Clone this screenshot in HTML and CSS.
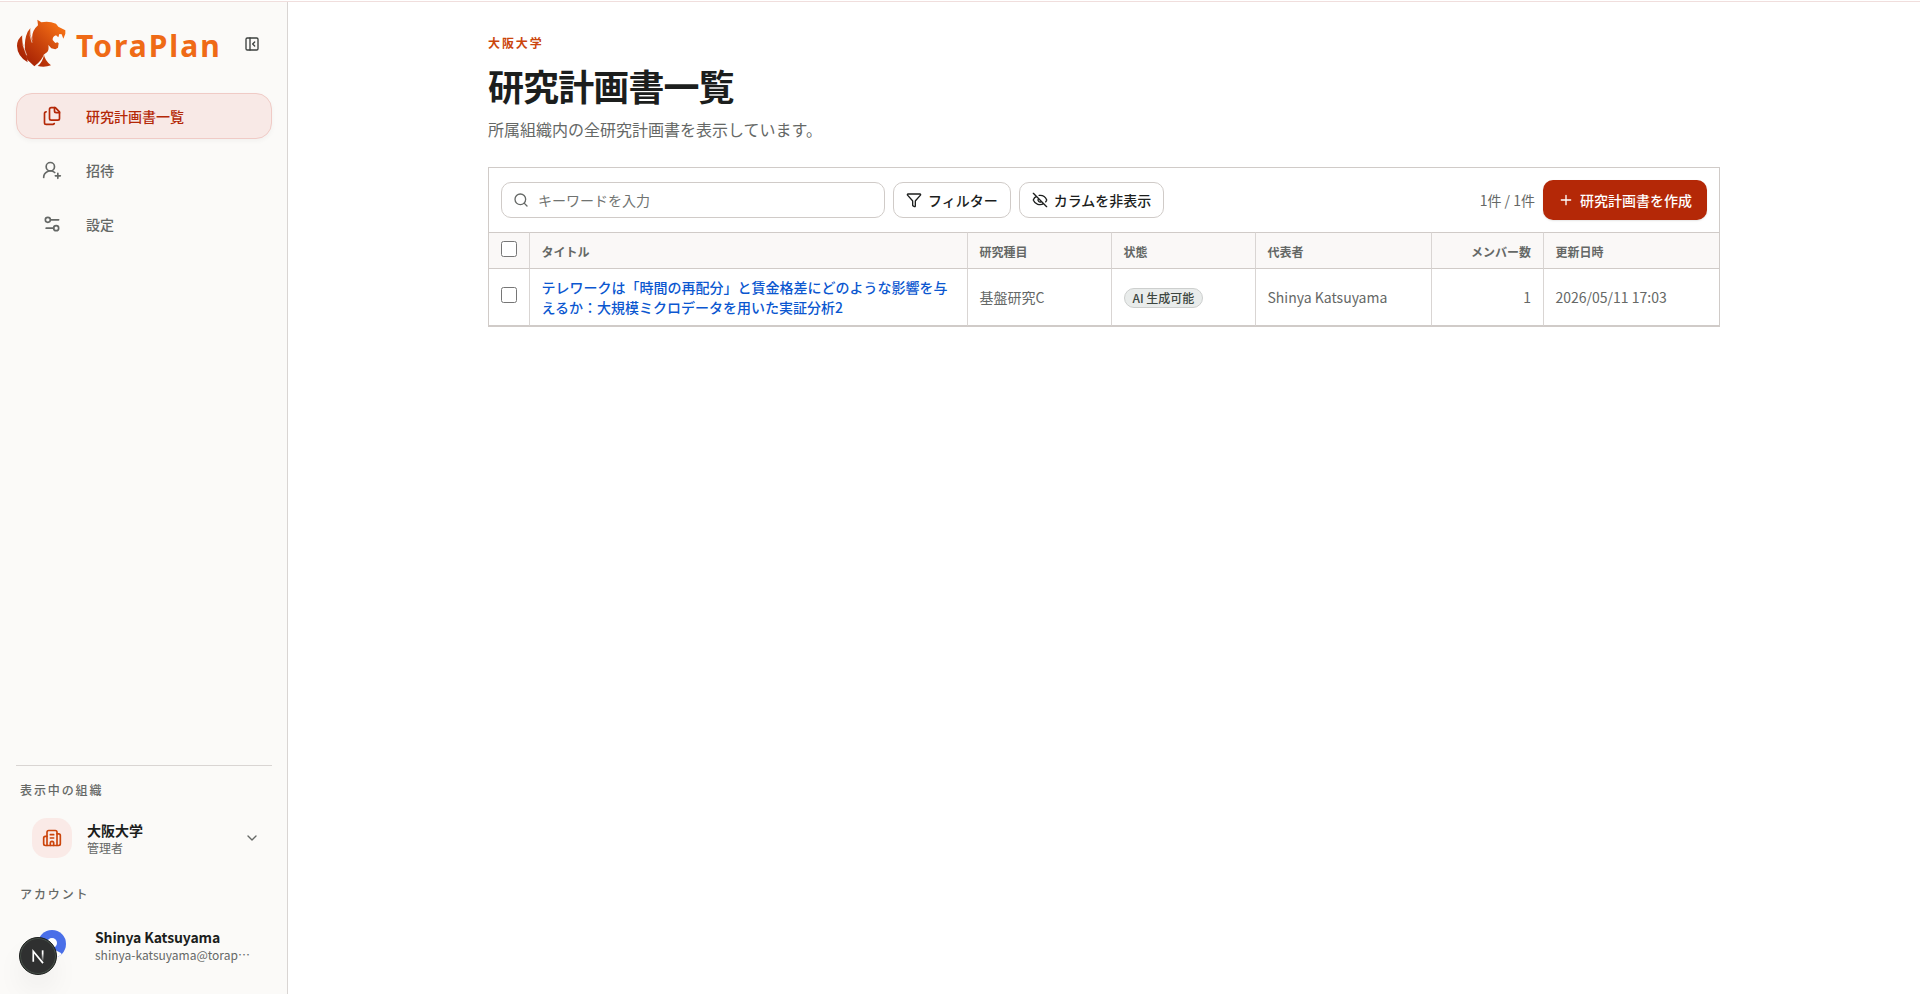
FILE: index.html
```
<!DOCTYPE html>
<html lang="ja">
<head>
    <meta charset="UTF-8">
    <meta name="viewport" content="width=device-width, initial-scale=1.0">
    <title>研究計画書一覧 | ToraPlan</title>
    <link rel="stylesheet" href="styles.css">
</head>
<body>
    <div class="layout">
        <aside class="sidebar">
            <div class="brand">
                <svg class="brand-mark" viewBox="12 12 150 150">
                    <defs>
                        <linearGradient id="tora" x1="0" y1="1" x2="1" y2="0">
                            <stop offset="0.15" stop-color="#a82305"/>
                            <stop offset="0.5" stop-color="#cb450c"/>
                            <stop offset="0.85" stop-color="#f26d14"/>
                        </linearGradient>
                    </defs>
                    <path fill="url(#tora)" d="M76 17L88 25Q110 20 132 29L139 38L160 49L160 59L154 74L149 61L142 60L139 70L132 64Q121 68 122 78L130 87L136 85L140 88L138 101L130 106L118 103L109 93Q112 108 105 115L95 122Q91 138 67 157L46 137L43 122L47 145Q16 127 15 96Q15 76 31 64Q30 88 39 108Q36 77 47 53L56 41Q54 62 61 80Q58 58 70 42L78 34ZM96 122Q98 138 117 154Q98 161 77 156Q92 145 96 122Z"/>
                    <path fill="none" stroke="#fbfaf8" stroke-width="2" d="M32 64Q29 96 44 124M56 42Q51 66 60 86"/>
                </svg>
                <span class="brand-name">ToraPlan</span>
                <button class="collapse" aria-label="サイドバーを閉じる">
                    <svg class="icon" viewBox="0 0 24 24"><rect x="3" y="3" width="18" height="18" rx="2"/><path d="M9 3v18M16 9l-3 3 3 3"/></svg>
                </button>
            </div>

            <nav class="nav">
                <a class="nav-item active" href="#">
                    <svg class="icon" viewBox="0 0 24 24"><path d="M16 2h-5a2 2 0 0 0-2 2v11a2 2 0 0 0 2 2h8a2 2 0 0 0 2-2V7z"/><path d="M15 2v4a2 2 0 0 0 2 2h4M5 7a2 2 0 0 0-2 2v11a2 2 0 0 0 2 2h8a2 2 0 0 0 1.7-1"/></svg>
                    <span>研究計画書一覧</span>
                </a>
                <a class="nav-item" href="#">
                    <svg class="icon" viewBox="0 0 24 24"><circle cx="10" cy="8" r="5"/><path d="M2 21a8 8 0 0 1 13.3-6M19 16v6M22 19h-6"/></svg>
                    <span>招待</span>
                </a>
                <a class="nav-item" href="#">
                    <svg class="icon" viewBox="0 0 24 24"><circle cx="7" cy="7" r="3"/><circle cx="17" cy="17" r="3"/><path d="M20 7h-9M14 17H5"/></svg>
                    <span>設定</span>
                </a>
            </nav>

            <div class="sidebar-footer">
                <p class="section-label">表示中の組織</p>
                <div class="org">
                    <span class="org-icon">
                        <svg class="icon" viewBox="0 0 24 24"><path d="M10 12h4M10 8h4M14 21v-3a2 2 0 0 0-4 0v3"/><path d="M6 10H4a2 2 0 0 0-2 2v7a2 2 0 0 0 2 2h16a2 2 0 0 0 2-2V9a2 2 0 0 0-2-2h-2"/><path d="M6 21V5a2 2 0 0 1 2-2h8a2 2 0 0 1 2 2v16"/></svg>
                    </span>
                    <div class="org-text">
                        <strong>大阪大学</strong>
                        <small>管理者</small>
                    </div>
                    <svg class="icon chevron" viewBox="0 0 24 24"><path d="m6 9 6 6 6-6"/></svg>
                </div>
                <p class="section-label">アカウント</p>
                <div class="account">
                    <svg class="avatar" viewBox="0 0 28 28">
                        <clipPath id="round"><circle cx="14" cy="14" r="14"/></clipPath>
                        <g clip-path="url(#round)">
                            <rect width="28" height="28" fill="#4a6fe8"/>
                            <circle cx="14" cy="13" r="5" fill="#fff"/>
                            <ellipse cx="14" cy="29" rx="12" ry="9" fill="#fff"/>
                        </g>
                    </svg>
                    <div class="account-text">
                        <strong>Shinya Katsuyama</strong>
                        <small>shinya-katsuyama@torap⋯</small>
                    </div>
                </div>
            </div>
        </aside>

        <main class="main">
            <div class="container">
                <p class="eyebrow">大阪大学</p>
                <h1>研究計画書一覧</h1>
                <p class="lead">所属組織内の全研究計画書を表示しています。</p>

                <section class="panel">
                    <div class="toolbar">
                        <label class="search">
                            <svg class="icon" viewBox="0 0 24 24"><circle cx="11" cy="11" r="8"/><path d="m21 21-4.3-4.3"/></svg>
                            <input type="text" placeholder="キーワードを入力">
                        </label>
                        <button class="btn">
                            <svg class="icon" viewBox="0 0 24 24"><path d="M10 20a1 1 0 0 0 .55.9l2 1A1 1 0 0 0 14 21v-7a2 2 0 0 1 .52-1.34L21.74 4.67A1 1 0 0 0 21 3H3a1 1 0 0 0-.74 1.67l7.22 7.99A2 2 0 0 1 10 14z"/></svg>
                            フィルター
                        </button>
                        <button class="btn">
                            <svg class="icon" viewBox="0 0 24 24"><path d="M10.73 5.08a10.74 10.74 0 0 1 11.21 6.57 1 1 0 0 1 0 .7 10.75 10.75 0 0 1-1.45 2.49M14.08 14.16a3 3 0 0 1-4.24-4.24M17.48 17.5a10.75 10.75 0 0 1-15.42-5.15 1 1 0 0 1 0-.7 10.75 10.75 0 0 1 4.45-5.14M2 2l20 20"/></svg>
                            カラムを非表示
                        </button>
                        <span class="count">1件 / 1件</span>
                        <button class="btn-primary">
                            <svg class="icon" viewBox="0 0 24 24"><path d="M5 12h14M12 5v14"/></svg>
                            研究計画書を作成
                        </button>
                    </div>
                    <table>
                        <colgroup>
                            <col class="col-check"><col class="col-title"><col class="col-type"><col class="col-status"><col class="col-owner"><col class="col-members"><col class="col-date">
                        </colgroup>
                        <thead>
                            <tr>
                                <th><input type="checkbox"></th>
                                <th>タイトル</th>
                                <th>研究種目</th>
                                <th>状態</th>
                                <th>代表者</th>
                                <th class="num">メンバー数</th>
                                <th>更新日時</th>
                            </tr>
                        </thead>
                        <tbody>
                            <tr>
                                <td><input type="checkbox"></td>
                                <td><a href="#">テレワークは「時間の再配分」と賃金格差にどのような影響を与えるか：大規模ミクロデータを用いた実証分析2</a></td>
                                <td>基盤研究C</td>
                                <td><span class="badge">AI 生成可能</span></td>
                                <td>Shinya Katsuyama</td>
                                <td class="num">1</td>
                                <td>2026/05/11 17:03</td>
                            </tr>
                        </tbody>
                    </table>
                </section>
            </div>
        </main>
    </div>

    <!-- Dev tools indicator -->
    <div class="dev-badge">
        <svg viewBox="0 0 38 38">
            <defs>
                <linearGradient id="fade" x1="0" y1="0" x2="0" y2="1">
                    <stop offset="0.3" stop-color="#fff"/>
                    <stop offset="1" stop-color="#fff" stop-opacity="0.1"/>
                </linearGradient>
            </defs>
            <path d="M14 25V14L24.3 26.5" fill="none" stroke="#fff" stroke-width="1.8"/>
            <rect x="23" y="13" width="1.8" height="11" fill="url(#fade)"/>
        </svg>
    </div>
</body>
</html>
```
FILE: styles.css
```
/* Base styles */
* {
    box-sizing: border-box;
}

body {
    margin: 0;
    padding-top: 1px;
    height: 100vh;
    font-family: 'Noto Sans CJK JP', sans-serif;
    font-size: 14px;
    line-height: 20px;
    color: #1c1e1d;
    background-color: #fff;
}

p, h1 {
    margin: 0;
}

a {
    text-decoration: none;
}

button, input {
    font-family: inherit;
    font-size: 14px;
}

.icon {
    width: 16px;
    height: 16px;
    flex-shrink: 0;
    fill: none;
    stroke: currentColor;
    stroke-width: 2;
    stroke-linecap: round;
    stroke-linejoin: round;
}

.layout {
    display: flex;
    height: 100%;
    border-top: 1px solid #f0dedd;
}

/* Sidebar */
.sidebar {
    width: 288px;
    flex-shrink: 0;
    display: flex;
    flex-direction: column;
    padding: 16px 15px 0 16px;
    background-color: #fbfaf8;
    border-right: 1px solid #d9d5d3;
}

.brand {
    display: flex;
    align-items: center;
    height: 50px;
}

.brand-mark {
    width: 50px;
    height: 50px;
}

.brand-name {
    margin-left: 10px;
    font-family: 'Noto Sans', sans-serif;
    font-size: 30px;
    font-weight: 700;
    line-height: 40px;
    letter-spacing: 2px;
    color: #ef6a16;
    padding-top: 5px;
}

.collapse {
    display: flex;
    margin-left: auto;
    margin-right: 12px;
    padding: 2px 0 0;
    border: none;
    background: none;
    color: #3c403e;
}

.nav {
    display: flex;
    flex-direction: column;
    gap: 8px;
    margin-top: 25px;
}

.nav-item {
    display: flex;
    align-items: center;
    gap: 24px;
    height: 46px;
    padding: 0 25px;
    border: 1px solid transparent;
    border-radius: 16px;
    color: #656866;
    font-weight: 500;
}

.nav-item .icon {
    width: 20px;
    height: 20px;
}

.nav-item.active {
    background-color: #f8e9e6;
    border-color: #f0cbc6;
    color: #b42807;
    box-shadow: 0 2px 5px rgba(0, 0, 0, 0.04);
}

.sidebar-footer {
    margin-top: auto;
    height: 229px;
    padding-top: 15px;
    border-top: 1px solid #d9d5d3;
}

.section-label {
    padding-left: 4px;
    font-size: 12px;
    line-height: 18px;
    font-weight: 500;
    letter-spacing: 1.9px;
    color: #656866;
}

.org {
    display: flex;
    align-items: center;
    height: 40px;
    margin: 19px 0 27px;
    padding: 0 14px 0 16px;
}

.org-icon {
    display: flex;
    align-items: center;
    justify-content: center;
    width: 40px;
    height: 40px;
    margin-right: 15px;
    border-radius: 15px;
    background-color: #faeae7;
    color: #cb450c;
}

.org-icon .icon {
    width: 20px;
    height: 20px;
}

.org-text, .account-text {
    display: flex;
    flex-direction: column;
}

.org strong, .account strong {
    line-height: 18px;
    font-weight: 700;
}

.org small, .account small {
    font-size: 12px;
    line-height: 17px;
    color: #656866;
}

.account strong {
    letter-spacing: -0.12px;
}

.chevron {
    margin-left: auto;
    margin-right: -2px;
    color: #656866;
}

.account {
    display: flex;
    align-items: center;
    gap: 29px;
    height: 36px;
    margin-top: 24px;
    padding-left: 22px;
}

.avatar {
    width: 28px;
    height: 28px;
    margin-top: -2px;
}

/* Main */
.main {
    flex: 1;
}

.container {
    width: 1232px;
    margin: 0 auto;
    padding-top: 32px;
}

.eyebrow {
    font-size: 12px;
    line-height: 18px;
    font-weight: 700;
    letter-spacing: 1.9px;
    color: #cb450c;
}

h1 {
    margin-top: 12px;
    font-size: 36px;
    line-height: 42px;
    font-weight: 700;
    letter-spacing: -0.9px;
}

.lead {
    margin-top: 10px;
    font-size: 16px;
    line-height: 26px;
    color: #656866;
}

.panel {
    margin-top: 25px;
    border: 1px solid #d0cbc8;
}

.toolbar {
    display: flex;
    align-items: center;
    gap: 8px;
    height: 64px;
    padding: 0 12px;
}

.search {
    display: flex;
    align-items: center;
    gap: 9px;
    width: 384px;
    height: 36px;
    padding: 0 11px;
    border: 1px solid #d0cbc8;
    border-radius: 10px;
    color: #656866;
}

.search input {
    flex: 1;
    border: none;
    outline: none;
    padding: 0;
}

.search input::placeholder {
    color: #707371;
}

.btn, .btn-primary {
    display: flex;
    align-items: center;
    gap: 6px;
    height: 36px;
    padding: 0 12px;
    border: 1px solid #d0cbc8;
    border-radius: 10px;
    background-color: #fff;
    color: #1c1e1d;
    font-weight: 500;
}

.count {
    margin-left: auto;
    color: #656866;
}

.btn-primary {
    height: 40px;
    padding: 0 15px;
    border: none;
    background-color: #b42807;
    color: #fff;
    box-shadow: 0 1px 2px rgba(0, 0, 0, 0.1);
}

/* Table */
table {
    width: 100%;
    table-layout: fixed;
    border-collapse: separate;
    border-spacing: 0;
}

.col-check { width: 41px; }
.col-title { width: 438px; }
.col-type, .col-status { width: 144px; }
.col-owner { width: 176px; }
.col-members { width: 112px; }

th, td {
    padding: 0 12px 0 11.5px;
    text-align: left;
    color: #656866;
    border-right: 1px solid #d9d5d3;
}

th:first-child, td:first-child {
    padding-left: 12px;
}

th {
    height: 37px;
    padding-top: 2px;
    font-size: 12px;
    font-weight: 700;
    background-color: #faf8f7;
    border-top: 1px solid #d0cbc8;
    border-bottom: 1px solid #d0cbc8;
}

td {
    height: 57px;
    border-bottom: 1px solid #d0cbc8;
}

th:last-child, td:last-child {
    border-right: none;
}

th.num, td.num {
    text-align: right;
}

td a {
    color: #0b57d0;
    font-weight: 500;
}

input[type="checkbox"] {
    display: block;
    width: 16px;
    height: 16px;
    margin: -5px 0 0;
}

.badge {
    display: inline-block;
    height: 20px;
    padding: 0 8px;
    border: 1px solid #cdcfce;
    border-radius: 10px;
    background-color: #e9eceb;
    color: #3c463f;
    font-size: 12px;
    line-height: 18px;
    font-weight: 500;
    vertical-align: middle;
}

.dev-badge {
    position: fixed;
    left: 19px;
    bottom: 19px;
    width: 38px;
    height: 38px;
    border: 1px solid #1d1f1e;
    border-radius: 50%;
    background-color: #2f3030;
    box-shadow: inset 0 0 0 1px #465048, 0 16px 32px -8px rgba(0, 0, 0, 0.14);
}

.dev-badge svg {
    display: block;
    width: 36px;
    height: 36px;
}
```
